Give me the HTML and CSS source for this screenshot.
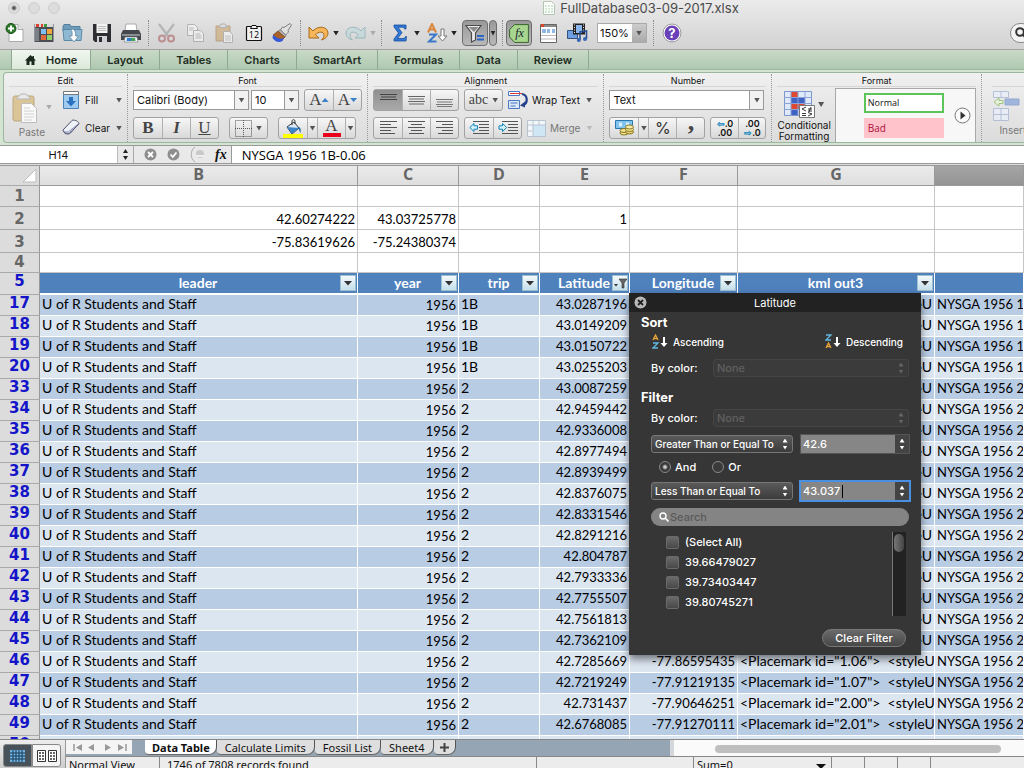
FILE: index.html
```html
<!DOCTYPE html>
<html lang="en">
<head>
<meta charset="utf-8">
<title>FullDatabase03-09-2017.xlsx</title>
<link rel="stylesheet" href="styles.css">
</head>
<body>
<header class="chrome">
  <div class="titlebar">
    <div class="lights"><span class="light light-edited"></span><span class="light"></span><span class="light"></span></div>
    <h1 class="title">
      <svg width="12" height="14" viewBox="0 0 12 14"><path d="M.5.500h8l3 3v10H.5z" fill="#fbfdfb" stroke="#b5c4b5"/><path d="M2 4h8v8H2z" fill="#cfe6cf"/><path d="M2 6.500h8M2 9h8M4.500 4v8M7.500 4v8" stroke="#fff"/></svg>
      FullDatabase03-09-2017.xlsx
    </h1>
  </div>
  <div class="toolbar">
    <button class="tool" aria-label="New"><svg width="20" height="20" viewBox="0 0 20 20"><path d="M4 1.500h9l5 5v12H4z" fill="#fff" stroke="#aaa"/><path d="M13 1.500v5h5" fill="#e8e8e8" stroke="#aaa"/><circle cx="6" cy="5.500" r="5" fill="#2c7a2a" stroke="#174d16"/><path d="M6 2.500v6M3 5.500h6" stroke="#fff" stroke-width="2"/></svg></button>
    <button class="tool" aria-label="Templates"><svg width="20" height="20" viewBox="0 0 20 20"><path d="M.5 1h19v18H.5z" fill="#4b4f55"/><path d="M1 1h18v3H1z" fill="#d9d9d9"/><path d="M2 1h3v3H2zM7 1h2v3H7z" fill="#d8412c"/><path d="M10 1h3v3h-3z" fill="#3f9a3f"/><path d="M1 5h4v13H1z" fill="#7b8087"/><path d="M7 6h5v5H7z" fill="#7fc1f4"/><path d="M13 6h5v5h-5z" fill="#f0a63a"/><path d="M7 12h5v5H7z" fill="#e06b3a"/><path d="M13 12h5v5h-5z" fill="#8ed36e"/></svg></button>
    <button class="tool" aria-label="Open"><svg width="21" height="20" viewBox="0 0 21 20"><path d="M1 3l1-1.500h6l1 2h9V8H1z" fill="#6f9cba" stroke="#54809e"/><path d="M1 6.500h19l-1 11H2z" fill="#8fb9d3" stroke="#5a89a8"/><path d="M9 6c4 0 5 3 4.500 7h3L12 19l-5-6h3c.4-3 0-5-1-7z" fill="#fff" stroke="#5d86a2" stroke-width=".8"/></svg></button>
    <button class="tool" aria-label="Save"><svg width="20" height="20" viewBox="0 0 20 20"><path d="M1 1h18v18H3l-2-2z" fill="#2c2e31"/><path d="M4.500 1h11v9h-11z" fill="#f3f3f3"/><path d="M6 3.500h8M6 5.500h8M6 7.500h8" stroke="#bbb"/><path d="M5 13h10v6H5z" fill="#cfd2d6"/><path d="M7 14h3v5H7z" fill="#2c2e31"/></svg></button>
    <button class="tool" aria-label="Print"><svg width="20" height="20" viewBox="0 0 20 20"><path d="M5 1h10l1 7H4z" fill="#fff" stroke="#999" stroke-width=".8"/><path d="M2 7h16l2 4v6H0v-6z" fill="#45484d"/><path d="M1 11h18v2H1z" fill="#8a8d92"/><path d="M4 14h12l1 5H3z" fill="#f4f8fc" stroke="#777" stroke-width=".6"/><path d="M6 15h4v3H5.500z" fill="#2e7fd0"/><path d="M10 15h4l.5 3H10z" fill="#43a35a"/></svg></button>
    <span class="divider"></span>
    <button class="tool tool-off" aria-label="Cut"><svg width="19" height="20" viewBox="0 0 19 20"><path d="M2 1l9 12M17 1L8 13" stroke="#8c8f93" stroke-width="2.200"/><circle cx="5" cy="15.500" r="3" fill="none" stroke="#a2484c" stroke-width="2"/><circle cx="14" cy="15.500" r="3" fill="none" stroke="#a2484c" stroke-width="2"/></svg></button>
    <button class="tool tool-off" aria-label="Copy"><svg width="19" height="20" viewBox="0 0 19 20"><path d="M1.500 1.500h7l3 3v8h-10z" fill="#fff" stroke="#888"/><path d="M7.500 7.500h7l3 3v8h-10z" fill="#fff" stroke="#888"/><path d="M3 5h5M3 7h4M9.500 11h5M9.500 13h6M9.500 15h6" stroke="#999"/></svg></button>
    <button class="tool tool-off" aria-label="Paste"><svg width="19" height="20" viewBox="0 0 19 20"><path d="M1 3h14v15H1z" fill="#c79a55" stroke="#94703a"/><path d="M4 4.500L6 1h4l2 3.500z" fill="#ddd" stroke="#888"/><path d="M8.500 8.500h6l3 3v8h-9z" fill="#fff" stroke="#888"/><path d="M10 13h6M10 15h6M10 17h6" stroke="#aaa"/></svg></button>
    <button class="tool" aria-label="Paste Special"><svg width="18" height="18" viewBox="0 0 18 18"><rect x="1.500" y="2.500" width="15" height="14" rx="1" fill="#f1f1f1" stroke="#111" stroke-width="1.200"/><path d="M5.500 4.500L7 1.500h4l1.500 3z" fill="#f1f1f1" stroke="#111"/><text x="9" y="14" text-anchor="middle" class="svg-num">12</text></svg></button>
    <button class="tool" aria-label="Format Painter"><svg width="21" height="20" viewBox="0 0 21 20"><path d="M19.500 2l-1.500-1.500-6 4-1.500-.5-2 3 5 5 3-3-.5-1.500z" fill="#e2e2e2" stroke="#666" stroke-width=".8"/><path d="M8 6.500l6 6-1.500 2-6.500-6z" fill="#b9bcc2" stroke="#555" stroke-width=".6"/><path d="M6 8L1 12l8 6 4-4z" fill="#a8622a" stroke="#6a3a14" stroke-width=".6"/><path d="M1 12l-.5 3c4 5 7 4.500 10 3l1.500-3c-4 2-7 0-11-3z" fill="#3558d8"/></svg></button>
    <span class="divider"></span>
    <button class="tool" aria-label="Undo"><svg width="21" height="18" viewBox="0 0 21 18"><path d="M1 3v11h10l-3.500-3.200C10 7.500 16 7 16 11c0 2-1 3.500-2.500 5C17 15 20 12.500 20 9c0-6.500-10-8-15-2z" fill="#f5b559" stroke="#a8691c"/></svg></button><span class="caret caret-tool"></span>
    <button class="tool tool-off" aria-label="Redo"><svg width="21" height="18" viewBox="0 0 21 18"><path d="M20 3v11H10l3.500-3.200C11 7.500 5 7 5 11c0 2 1 3.500 2.500 5C4 15 1 12.500 1 9c0-6.500 10-8 15-2z" fill="#b9dadf" stroke="#5f97a2"/></svg></button><span class="caret caret-tool caret-off"></span>
    <span class="divider"></span>
    <button class="tool" aria-label="AutoSum"><svg width="14" height="18" viewBox="0 0 14 18"><path d="M1 1h12v4h-1.500C11 3.500 10.500 3.200 9 3.200H5l4 5.500-4.500 5.800H10c1.500 0 2-.5 2.500-2H13.500L13 17H1v-2l4.500-6L1 3z" fill="#2f78d6" stroke="#1b4f9c" stroke-width=".8"/></svg></button><span class="caret caret-tool"></span>
    <button class="tool" aria-label="Sort"><svg width="22" height="20" viewBox="0 0 22 20"><path d="M2 9.500L6 1l4 8.500M3.500 6.500h5" fill="none" stroke="#d9853a" stroke-width="2"/><path d="M3 11.500h7L3 18.500h7.500" fill="none" stroke="#3b78c9" stroke-width="2"/><path d="M15 6h3v7h3l-4.500 5L12 13h3z" fill="#fff" stroke="#777"/></svg></button><span class="caret caret-tool"></span>
    <div class="pressed-pair">
      <button class="pressed" aria-label="Filter"><svg width="20" height="19" viewBox="0 0 20 19"><path d="M1 1.500h15L10.500 9v7l-4 2V9z" fill="#ececec" stroke="#4a4a4a" stroke-width="1.200"/><path d="M3.500 3h10L9 8z" fill="#8b8b8b"/><path d="M12 12h7M12 15.500h7" stroke="#2c66c4" stroke-width="2"/></svg></button>
      <button class="pressed pressed-arrow" aria-label="Filter options"><span class="caret"></span></button>
    </div>
    <span class="divider"></span>
    <button class="pressed" aria-label="Formula Builder"><svg width="20" height="19" viewBox="0 0 20 19"><path d="M5.500.600H19.400v17.800H5.500L.6 13V5.500z" fill="#a9d68f" stroke="#35652c"/><text x="10.500" y="13" text-anchor="middle" class="svg-fx">fx</text></svg></button>
    <button class="tool tool-lead" aria-label="Show Toolbox"><svg width="17" height="19" viewBox="0 0 17 19"><path d="M.5.500h16v18H.5z" fill="#fff" stroke="#666"/><path d="M1 1h15v2H1z" fill="#8a8a8a"/><path d="M1 0h3v3H1z" fill="#d4472b"/><path d="M2 5h4v4H2zM7 5h3v4H7zM12 5h3v4h-3z" fill="#8fb7e6"/><path d="M1 11.500h15M1 15h15" stroke="#b9b9b9"/></svg></button>
    <button class="tool" aria-label="Media Browser"><svg width="21" height="20" viewBox="0 0 21 20"><path d="M.5 7.500h10v8H.5z" fill="#6f9fe0" stroke="#34527f"/><path d="M6 .500h12v11H6z" fill="#222"/><path d="M9 2h6v8H9z" fill="#8ab7ee"/><path d="M7 2h1M7 4.500h1M7 7h1M7 9.500h1M16 2h1M16 4.500h1M16 7h1" stroke="#eee"/><path d="M13 17V9l6.500-1v8" fill="none" stroke="#2b4f93" stroke-width="1.600"/><circle cx="11.800" cy="17" r="2" fill="#3765b5"/><circle cx="18" cy="16" r="2" fill="#3765b5"/></svg></button>
    <div class="zoom"><input class="zoom-value" type="text" value="150%" aria-label="Zoom"><button class="zoom-drop" aria-label="Zoom levels"><span class="caret caret-dim"></span></button></div>
    <span class="divider"></span>
    <button class="tool" aria-label="Help"><svg width="20" height="20" viewBox="0 0 20 20"><circle cx="10" cy="10" r="9" fill="#fff" stroke="#999"/><circle cx="10" cy="10" r="7.500" fill="#6a40b8"/><text x="10" y="15" text-anchor="middle" class="svg-help">?</text></svg></button>
    <button class="search-round" aria-label="Search in sheet"><svg width="12" height="12" viewBox="0 0 12 12"><circle cx="5" cy="5" r="3.800" fill="none" stroke="#333" stroke-width="2"/><path d="M8 8l3.500 3.500" stroke="#333" stroke-width="2"/></svg></button>
  </div>
</header>

<nav class="tabs">
  <span class="tabs-edge"></span>
  <button class="tab tab-on"><svg width="11" height="10" viewBox="0 0 11 10"><path d="M5.500 0L0 5.500h1.500V10h3V6.500h2V10h3V5.500H11L9 3.500V1H7.500v1z" fill="#1b2a1b"/></svg>Home</button>
  <button class="tab">Layout</button>
  <button class="tab">Tables</button>
  <button class="tab">Charts</button>
  <button class="tab">SmartArt</button>
  <button class="tab">Formulas</button>
  <button class="tab">Data</button>
  <button class="tab">Review</button>
</nav>

<section class="ribbon">
  <div class="panel">
    <div class="group">
      <h2>Edit</h2>
      <div class="side">
        <button class="big big-off paste"><span class="big-row"><svg width="26" height="31" viewBox="0 0 26 31"><rect x="1" y="4" width="21" height="25" rx="2" fill="#d9bd84" stroke="#b39a68"/><path d="M5 7c0-4 3-2 4-5h5c1 3 4 1 4 5z" fill="#e9e9e9" stroke="#aaa"/><path d="M9.500 11.500h10l5 5v14h-15z" fill="#fff" stroke="#b5b5b5"/><path d="M12 16h6M12 19h10M12 22h10M12 25h10M12 28h8" stroke="#ccc"/></svg><span class="caret caret-off"></span></span>Paste</button>
        <div class="rows">
          <div class="row"><button class="flat"><svg width="18" height="20" viewBox="0 0 18 20"><path d="M1.500 4.500h15v14h-15z" fill="#9fcbf0" stroke="#4b82b8"/><path d="M1.500 1.500h15v3h-15z" fill="#fff" stroke="#777"/><path d="M7 7h4v4h3l-5 5.500L4 11h3z" fill="#2a72c0"/></svg><span class="flat-label">Fill</span><span class="caret"></span></button></div>
          <div class="row"><button class="flat"><svg width="18" height="18" viewBox="0 0 18 18"><path d="M1 11L10 1.500c1-1 6 0 7 3L8.500 14c-2 2-7 1-7.500-3z" fill="#f0f2fa" stroke="#4c4f66"/><path d="M1 11c2 3 5 2 7 .500L17 4.500" fill="none" stroke="#8c91b5"/><path d="M1.500 12.500c2 2.500 5 2 6.500 1L17 5" fill="none" stroke="#5a5f80"/></svg><span class="flat-label">Clear</span><span class="caret"></span></button></div>
        </div>
      </div>
    </div>
    <div class="group">
      <h2>Font</h2>
      <div class="rows">
        <div class="row">
          <div class="combo combo-font"><input type="text" value="Calibri (Body)" aria-label="Font name"><button aria-label="Font list"><span class="caret"></span></button></div>
          <div class="combo combo-size"><input type="text" value="10" aria-label="Font size"><button aria-label="Size list"><span class="caret"></span></button></div>
          <div class="seg seg-after"><button aria-label="Grow font" class="serif">A<i class="up"></i></button><button aria-label="Shrink font" class="serif">A<i class="down"></i></button></div>
        </div>
        <div class="row row-wide">
          <div class="seg"><button class="serif"><b>B</b></button><button class="serif"><b><em>I</em></b></button><button class="serif"><u>U</u></button></div>
          <div class="seg"><button class="with-caret" aria-label="Borders"><svg width="17" height="17" viewBox="0 0 17 17"><path d="M.5.500h16v16H.5zM8.500 0v17M0 8.500h17" fill="none" stroke="#555" stroke-dasharray="1 1"/></svg><span class="caret"></span></button></div>
          <div class="seg"><button aria-label="Fill color" class="swatch"><svg width="20" height="19" viewBox="0 0 20 19"><path d="M4 8l7-5 5 6-7 6z" fill="#dfe8f2" stroke="#333"/><path d="M4 8l12 1-7 6z" fill="#3e86c8"/><path d="M9 6V2.500C9 0 12 0 12 2.500V5" fill="none" stroke="#333"/><path d="M15 8c3 0 3 3 2.500 6-1.500-2-1-4-3-5z" fill="#2867a8"/><path d="M0 15h20v4H0z" fill="#ff0"/></svg></button><button class="thin" aria-label="Fill color list"><span class="caret"></span></button><button aria-label="Font color" class="swatch serif"><span class="ink">A</span></button><button class="thin" aria-label="Font color list"><span class="caret"></span></button></div>
        </div>
      </div>
    </div>
    <div class="group">
      <h2>Alignment</h2>
      <div class="rows">
        <div class="row">
          <div class="seg"><button class="on" aria-label="Align top"><svg width="17" height="14" viewBox="0 0 17 14"><path d="M0 1.500h17M1 4h15M0 6.500h17" stroke="#444"/></svg></button><button aria-label="Align middle"><svg width="17" height="14" viewBox="0 0 17 14"><path d="M0 3.500h17M1 6h15M0 8.500h17M1 11h15" stroke="#666"/></svg></button><button aria-label="Align bottom"><svg width="17" height="14" viewBox="0 0 17 14"><path d="M0 6.500h17M1 9h15M0 11.500h17M1 13.500h15" stroke="#777"/></svg></button></div>
          <div class="seg"><button class="with-caret serif abc">abc<span class="caret"></span></button></div>
          <button class="flat wrap"><svg width="20" height="18" viewBox="0 0 20 18"><path d="M.5.500h11v4H.5z" fill="#fff" stroke="#4a76c2"/><path d="M2 2.500h12" stroke="#d33"/><path d="M.5 9.500h11v8H.5z" fill="#dbe8fa" stroke="#4a76c2"/><path d="M2.500 12h7M2.500 15h5" stroke="#4a76c2"/><path d="M14 3c6 1 6 9 1.500 11" fill="none" stroke="#27408b" stroke-width="2.200"/><path d="M17 10.500v6l-5-2z" fill="#27408b"/></svg><span>Wrap Text</span><span class="caret"></span></button>
        </div>
        <div class="row">
          <div class="seg"><button aria-label="Align left"><svg width="17" height="14" viewBox="0 0 17 14"><path d="M0 .500h17M0 3.500h11M0 6.500h17M0 9.500h11M0 12.500h15" stroke="#555"/></svg></button><button aria-label="Align center"><svg width="17" height="14" viewBox="0 0 17 14"><path d="M0 .500h17M3 3.500h11M0 6.500h17M3 9.500h11M1 12.500h15" stroke="#555"/></svg></button><button aria-label="Align right"><svg width="17" height="14" viewBox="0 0 17 14"><path d="M0 .500h17M6 3.500h11M0 6.500h17M6 9.500h11M2 12.500h15" stroke="#555"/></svg></button></div>
          <div class="seg"><button aria-label="Decrease indent"><svg width="20" height="14" viewBox="0 0 20 14"><path d="M4 .500h16M10 3.500h10M10 6.500h10M10 9.500h10M4 12.500h16" stroke="#555"/><path d="M.8 6.500L5 2.500v2.300h3.500v3.400H5v2.300z" fill="#d7f1fb" stroke="#0f86bd"/></svg></button><button aria-label="Increase indent"><svg width="20" height="14" viewBox="0 0 20 14"><path d="M4 .500h16M10 3.500h10M10 6.500h10M10 9.500h10M4 12.500h16" stroke="#555"/><path d="M8.700 6.500L4.500 2.500v2.300H1v3.400h3.500v2.300z" fill="#d7f1fb" stroke="#0f86bd"/></svg></button></div>
          <button class="flat wrap flat-off"><svg width="19" height="17" viewBox="0 0 19 17"><path d="M.5.500h18v16H.5z" fill="#f4f7fa" stroke="#b7c4cf"/><path d="M6 5h12v11H6z" fill="#cfe6f5"/><path d="M.5 5h18M.5 11h5M6 .500v16M12 .500V5" stroke="#b7c4cf"/></svg><span>Merge</span><span class="caret"></span></button>
        </div>
      </div>
    </div>
    <div class="group">
      <h2>Number</h2>
      <div class="rows">
        <div class="row"><div class="combo combo-number"><input type="text" value="Text" aria-label="Number format"><button aria-label="Format list"><span class="caret"></span></button></div></div>
        <div class="row">
          <div class="seg"><button aria-label="Currency"><svg width="19" height="16" viewBox="0 0 19 16"><path d="M.5.500h17v8H.5z" fill="#7fc4ee" stroke="#2b76ae"/><path d="M4 2.500h3v4H4zM11 2.500h3v3h-3z" fill="#d9f0fc"/><ellipse cx="9" cy="13" rx="4" ry="2" fill="#f3e38a" stroke="#857628"/><ellipse cx="9" cy="10.500" rx="4" ry="2" fill="#f3e38a" stroke="#857628"/><ellipse cx="14.500" cy="12" rx="4" ry="2" fill="#e5d06a" stroke="#857628"/><ellipse cx="14.500" cy="9.500" rx="4" ry="2" fill="#f3e38a" stroke="#857628"/><ellipse cx="14.500" cy="7" rx="4" ry="2" fill="#f7eca8" stroke="#857628"/></svg></button><button class="thin" aria-label="Currency list"><span class="caret"></span></button><button class="glyph">%</button><button class="serif comma"><b>,</b></button></div>
          <div class="seg"><button class="dec" aria-label="Increase decimal"><span><i class="arrow-l">⇦</i>.0</span><span>.00</span></button><button class="dec" aria-label="Decrease decimal"><span>.00</span><span><i class="arrow-l">⇨</i>.0</span></button></div>
        </div>
      </div>
    </div>
    <div class="group">
      <h2>Format</h2>
      <div class="side side-format">
        <button class="big cond"><span class="big-row"><svg width="32" height="28" viewBox="0 0 32 28"><path d="M.5.500h27v24H.5z" fill="#dfe9fa" stroke="#7d97cc"/><path d="M7 1h7v5H7zM7 13h14v5H7z" fill="#e0492f"/><path d="M7 7h14v5H7zM7 19h7v5H7z" fill="#3f63c4"/><path d="M0 6.500h28M0 12.500h28M0 18.500h28M7 0v25M14 0v25M21 0v25" stroke="#8ba3d6"/><path d="M15.500 14.500h15v12h-15z" fill="#fff" stroke="#777"/><path d="M22 16l-4 2 4 2M18 22.500h4M24 18h4M24 20h4M27 16l-2 5M24 21.500l4 1.500-4 2M18 24.500h4" fill="none" stroke="#222" stroke-width=".9"/></svg><span class="caret"></span></span>Conditional<br>Formatting</button>
        <div class="gallery">
          <div class="styles"><button class="style-normal">Normal</button><button class="style-bad">Bad</button></div>
          <button class="more" aria-label="More styles"><svg width="17" height="17" viewBox="0 0 17 17"><circle cx="8.500" cy="8.500" r="7.500" fill="#fafafa" stroke="#777"/><path d="M6.500 4.500v8l5-4z" fill="#333"/></svg></button>
        </div>
      </div>
    </div>
    <div class="group group-last">
      <h2></h2>
      <button class="big big-off insert"><span class="big-row"><svg width="28" height="31" viewBox="0 0 28 31"><path d="M1.500 1.500h15v6h-15zM9 1v7M1.500 18.500h15v12h-15zM9 18v13M1 24.500h16" fill="#e9eef8" stroke="#a9b6d3"/><path d="M13 9h14v6H13z" fill="#8fa9dc" stroke="#7f99cc"/><path d="M2 12l5-4v2.500h4v3H7V16z" fill="#e6f6d8" stroke="#8fbf6a"/></svg><span class="caret caret-off"></span></span>Insert</button>
    </div>
  </div>
</section>

<section class="formula">
  <input class="name-box" type="text" value="H14" aria-label="Name box">
  <span class="name-step"><i></i><i></i></span>
  <div class="formula-tools">
    <svg width="13" height="13" viewBox="0 0 13 13"><circle cx="6.500" cy="6.500" r="6" fill="#8e8e8e"/><path d="M4 4l5 5M9 4L4 9" stroke="#fff" stroke-width="1.800"/></svg>
    <svg width="13" height="13" viewBox="0 0 13 13"><circle cx="6.500" cy="6.500" r="6" fill="#8e8e8e"/><path d="M3.500 6.500l2.300 2.500L9.500 4.500" fill="none" stroke="#fff" stroke-width="1.800"/></svg>
    <svg width="15" height="17" viewBox="0 0 15 17"><path d="M5 1C0 4 0 13 5 16" fill="none" stroke="#aaa"/><circle cx="10" cy="8" r="4" fill="#c9c9c9"/><path d="M6 10h8" stroke="#eee" stroke-width="2"/></svg>
    <span class="fx">fx</span>
  </div>
  <input class="formula-text" type="text" value="NYSGA 1956 1B-0.06" aria-label="Formula">
</section>

<main class="sheet">
<table>
  <colgroup><col class="c-row"><col class="c-b"><col class="c-c"><col class="c-d"><col class="c-e"><col class="c-f"><col class="c-g"><col></colgroup>
  <thead><tr class="letters"><th class="corner"><svg width="15" height="15" viewBox="0 0 15 15"><path d="M14 1v13H1z" fill="#fff" stroke="#bbb"/></svg></th><th>B</th><th>C</th><th>D</th><th>E</th><th>F</th><th>G</th><th class="picked"></th></tr></thead>
  <tbody class="plain">
    <tr class="short"><th>1</th><td></td><td></td><td></td><td></td><td></td><td></td><td></td></tr>
    <tr><th>2</th><td class="n">42.60274222</td><td class="n">43.03725778</td><td></td><td class="n">1</td><td></td><td></td><td></td></tr>
    <tr><th>3</th><td class="n">-75.83619626</td><td class="n">-75.24380374</td><td></td><td></td><td></td><td></td><td></td></tr>
    <tr class="shorter"><th>4</th><td></td><td></td><td></td><td></td><td></td><td></td><td></td></tr>
  </tbody>
  <tbody class="data">
    <tr class="fields"><th class="r">5</th>
      <th><div class="field"><span>leader</span><button class="drop" aria-label="Filter leader"></button></div></th>
      <th><div class="field"><span>year</span><button class="drop" aria-label="Filter year"></button></div></th>
      <th><div class="field"><span>trip</span><button class="drop" aria-label="Filter trip"></button></div></th>
      <th><div class="field"><span>Latitude</span><button class="drop drop-on" aria-label="Filter Latitude"><svg width="14" height="12" viewBox="0 0 14 12"><path d="M1 7h4L3 9.500z" fill="#333"/><path d="M6 2h8L11 6v5H9V6z" fill="#666" stroke="#333" stroke-width=".6"/></svg></button></div></th>
      <th><div class="field"><span>Longitude</span><button class="drop" aria-label="Filter Longitude"></button></div></th>
      <th><div class="field"><span>kml out3</span><button class="drop" aria-label="Filter kml out3"></button></div></th>
      <th class="field-h"></th></tr>
    <tr><th>17</th><td>U of R Students and Staff</td><td class="y">1956</td><td>1B</td><td class="n">43.0287196</td><td></td><td class="k">&lt;styleU</td><td class="h">NYSGA 1956 1B-0.03</td></tr>
    <tr><th>18</th><td>U of R Students and Staff</td><td class="y">1956</td><td>1B</td><td class="n">43.0149209</td><td></td><td class="k">&lt;styleU</td><td class="h">NYSGA 1956 1B-0.04</td></tr>
    <tr><th>19</th><td>U of R Students and Staff</td><td class="y">1956</td><td>1B</td><td class="n">43.0150722</td><td></td><td class="k">&lt;styleU</td><td class="h">NYSGA 1956 1B-0.05</td></tr>
    <tr><th>20</th><td>U of R Students and Staff</td><td class="y">1956</td><td>1B</td><td class="n">43.0255203</td><td></td><td class="k">&lt;styleU</td><td class="h">NYSGA 1956 1B-0.06</td></tr>
    <tr><th>33</th><td>U of R Students and Staff</td><td class="y">1956</td><td>2</td><td class="n">43.0087259</td><td></td><td class="k">&lt;styleU</td><td class="h">NYSGA 1956 2</td></tr>
    <tr><th>34</th><td>U of R Students and Staff</td><td class="y">1956</td><td>2</td><td class="n">42.9459442</td><td></td><td class="k">&lt;styleU</td><td class="h">NYSGA 1956 2</td></tr>
    <tr><th>35</th><td>U of R Students and Staff</td><td class="y">1956</td><td>2</td><td class="n">42.9336008</td><td></td><td class="k">&lt;styleU</td><td class="h">NYSGA 1956 2</td></tr>
    <tr><th>36</th><td>U of R Students and Staff</td><td class="y">1956</td><td>2</td><td class="n">42.8977494</td><td></td><td class="k">&lt;styleU</td><td class="h">NYSGA 1956 2</td></tr>
    <tr><th>37</th><td>U of R Students and Staff</td><td class="y">1956</td><td>2</td><td class="n">42.8939499</td><td></td><td class="k">&lt;styleU</td><td class="h">NYSGA 1956 2</td></tr>
    <tr><th>38</th><td>U of R Students and Staff</td><td class="y">1956</td><td>2</td><td class="n">42.8376075</td><td></td><td class="k">&lt;styleU</td><td class="h">NYSGA 1956 2</td></tr>
    <tr><th>39</th><td>U of R Students and Staff</td><td class="y">1956</td><td>2</td><td class="n">42.8331546</td><td></td><td class="k">&lt;styleU</td><td class="h">NYSGA 1956 2</td></tr>
    <tr><th>40</th><td>U of R Students and Staff</td><td class="y">1956</td><td>2</td><td class="n">42.8291216</td><td></td><td class="k">&lt;styleU</td><td class="h">NYSGA 1956 2</td></tr>
    <tr><th>41</th><td>U of R Students and Staff</td><td class="y">1956</td><td>2</td><td class="n">42.804787</td><td></td><td class="k">&lt;styleU</td><td class="h">NYSGA 1956 2</td></tr>
    <tr><th>42</th><td>U of R Students and Staff</td><td class="y">1956</td><td>2</td><td class="n">42.7933336</td><td></td><td class="k">&lt;styleU</td><td class="h">NYSGA 1956 2</td></tr>
    <tr><th>43</th><td>U of R Students and Staff</td><td class="y">1956</td><td>2</td><td class="n">42.7755507</td><td></td><td class="k">&lt;styleU</td><td class="h">NYSGA 1956 2</td></tr>
    <tr><th>44</th><td>U of R Students and Staff</td><td class="y">1956</td><td>2</td><td class="n">42.7561813</td><td></td><td class="k">&lt;styleU</td><td class="h">NYSGA 1956 2</td></tr>
    <tr><th>45</th><td>U of R Students and Staff</td><td class="y">1956</td><td>2</td><td class="n">42.7362109</td><td></td><td class="k">&lt;styleU</td><td class="h">NYSGA 1956 2</td></tr>
    <tr><th>46</th><td>U of R Students and Staff</td><td class="y">1956</td><td>2</td><td class="n">42.7285669</td><td class="n">-77.86595435</td><td>&lt;Placemark id="1.06"&gt;  &lt;styleU</td><td class="h">NYSGA 1956 2</td></tr>
    <tr><th>47</th><td>U of R Students and Staff</td><td class="y">1956</td><td>2</td><td class="n">42.7219249</td><td class="n">-77.91219135</td><td>&lt;Placemark id="1.07"&gt;  &lt;styleU</td><td class="h">NYSGA 1956 2</td></tr>
    <tr><th>48</th><td>U of R Students and Staff</td><td class="y">1956</td><td>2</td><td class="n">42.731437</td><td class="n">-77.90646251</td><td>&lt;Placemark id="2.00"&gt;  &lt;styleU</td><td class="h">NYSGA 1956 2</td></tr>
    <tr><th>49</th><td>U of R Students and Staff</td><td class="y">1956</td><td>2</td><td class="n">42.6768085</td><td class="n">-77.91270111</td><td>&lt;Placemark id="2.01"&gt;  &lt;styleU</td><td class="h">NYSGA 1956 2</td></tr>
    <tr><th>50</th><td></td><td></td><td></td><td></td><td></td><td></td><td></td></tr>
  </tbody>
</table>
</main>

<form class="filter">
  <div class="filter-head"><button type="button" class="close" aria-label="Close"><svg width="13" height="13" viewBox="0 0 13 13"><circle cx="6.500" cy="6.500" r="6" fill="#b9b9b9"/><path d="M4 4l5 5M9 4L4 9" stroke="#222" stroke-width="1.800"/></svg></button><span>Latitude</span></div>
  <div class="filter-body">
    <h3>Sort</h3>
    <div class="sorts">
      <button type="button"><svg width="16" height="15" viewBox="0 0 16 15"><path d="M1 6l2.500-5L6 6M2 4.500h3" fill="none" stroke="#e8a33a" stroke-width="1.300"/><path d="M1 9h5l-5 5h5" fill="none" stroke="#62b8e0" stroke-width="1.300"/><path d="M11 3h2v6h2.500L12 13 8.500 9H11z" fill="#fff"/></svg>Ascending</button>
      <button type="button"><svg width="16" height="15" viewBox="0 0 16 15"><path d="M1 1h5L1 6h5" fill="none" stroke="#62b8e0" stroke-width="1.300"/><path d="M1 14l2.500-5L6 14M2 12.500h3" fill="none" stroke="#e8a33a" stroke-width="1.300"/><path d="M11 3h2v6h2.500L12 13 8.500 9H11z" fill="#fff"/></svg>Descending</button>
    </div>
    <div class="by-color by-sort"><label for="sort-color">By color:</label><div class="pick pick-off"><select id="sort-color" disabled><option>None</option></select><span class="ticks"><i></i><i></i></span></div></div>
    <h3>Filter</h3>
    <div class="by-color"><label for="filter-color">By color:</label><div class="pick pick-off"><select id="filter-color" disabled><option>None</option></select><span class="ticks"><i></i><i></i></span></div></div>
    <div class="rule">
      <div class="pick"><select aria-label="First condition"><option>Greater Than or Equal To</option></select><span class="ticks"><i></i><i></i></span></div>
      <div class="amount"><input type="text" value="42.6" aria-label="First value"><span class="ticks"><i></i><i></i></span></div>
    </div>
    <div class="joins"><label><input type="radio" name="join" checked>And</label><label><input type="radio" name="join">Or</label></div>
    <div class="rule">
      <div class="pick"><select aria-label="Second condition"><option>Less Than or Equal To</option></select><span class="ticks"><i></i><i></i></span></div>
      <div class="amount amount-on"><input type="text" value="43.037" aria-label="Second value"><b class="cursor"></b><span class="ticks"><i></i><i></i></span></div>
    </div>
    <div class="find"><svg width="10" height="10" viewBox="0 0 10 10"><circle cx="4" cy="4" r="3" fill="none" stroke="#fff" stroke-width="1.400"/><path d="M6.300 6.300L9.500 9.500" stroke="#fff" stroke-width="1.600"/></svg><input type="search" placeholder="Search" aria-label="Search values"></div>
    <div class="values">
      <div class="value-list">
        <label><input type="checkbox">(Select All)</label>
        <label><input type="checkbox">39.66479027</label>
        <label><input type="checkbox">39.73403447</label>
        <label><input type="checkbox">39.80745271</label>
      </div>
      <div class="track"><div class="thumb"></div></div>
    </div>
    <button type="button" class="clear">Clear Filter</button>
  </div>
</form>

<footer class="bottom">
  <div class="views">
    <button class="view view-on" aria-label="Normal View"><svg width="15" height="12" viewBox="0 0 15 12"><path d="M0 0h15v12H0z" fill="#6fb4e6"/><path d="M0 3h15M0 6h15M0 9h15M3 0v12M6 0v12M9 0v12M12 0v12" stroke="#1d3a52"/></svg></button>
    <button class="view" aria-label="Page Layout View"><svg width="20" height="12" viewBox="0 0 20 12"><path d="M.5.500h8v11h-8zM11.500.500h8v11h-8z" fill="#fff" stroke="#333"/><path d="M2 3h5M2 6h5M2 9h5M13 3h5M13 6h5M13 9h5" stroke="#333" stroke-width="1.600" stroke-dasharray="2 1"/></svg></button>
  </div>
  <div class="bars">
    <div class="sheet-bar">
      <div class="steps"><svg width="56" height="9" viewBox="0 0 56 9"><path d="M1 1v7M53 1v7" stroke="#999" stroke-width="1.500"/><path d="M9 1v7L3 4.500zM21 1v7l-6-3.500zM32 1v7l6-3.500zM45 1v7l6-3.500z" fill="#999"/></svg></div>
      <div class="sheets">
        <button class="sheet-tab sheet-tab-on">Data Table</button><button class="sheet-tab">Calculate Limits</button><button class="sheet-tab">Fossil List</button><button class="sheet-tab">Sheet4</button><button class="sheet-tab add" aria-label="Add sheet"><svg width="9" height="9" viewBox="0 0 9 9"><path d="M4.500 0v9M0 4.500h9" stroke="#444" stroke-width="2"/></svg></button>
      </div>
      <div class="scroll"><div class="scroll-thumb"></div></div>
    </div>
    <div class="status"><span class="s-view">Normal View</span><span class="s-found">1746 of 7808 records found</span><span class="s-gap"></span><span class="s-sum">Sum=0<span class="caret caret-big"></span></span><span class="s-box"></span><span class="s-box"></span><span class="s-box"></span><span class="s-rest"></span></div>
  </div>
</footer>
</body>
</html>
```

FILE: styles.css
```css
* { box-sizing: border-box; }
html, body { height: 100%; }
body {
  margin: 0; display: flex; flex-direction: column; overflow: hidden;
  position: relative; background: #fff; color: #111;
  font: 11px/14px Inter, sans-serif;
}
button, input, select { font: inherit; color: inherit; margin: 0; padding: 0; border: 0; background: none; border-radius: 0; min-width: 0; }
button { display: flex; align-items: center; justify-content: center; }
svg { display: block; flex: none; }
h1, h2, h3 { margin: 0; font-weight: 400; }

.caret { flex: none; width: 6px; height: 5px; background: #555; clip-path: polygon(0 0, 100% 0, 50% 100%); }
.caret-tool { background: #222; margin-right: 2px; }
.caret-off { background: #aaa; }
.caret-dim { background: #555; }

/* title bar and toolbar */
.chrome { flex: none; height: 50px; background: linear-gradient(#ebebeb, #d2d2d2); border-bottom: 1px solid #a3a3a3; }
.titlebar { height: 16px; display: flex; align-items: center; }
.lights { position: absolute; display: flex; gap: 8px; padding-left: 8px; }
.light { width: 12px; height: 12px; border-radius: 50%; background: #dcdcdc; border: 1px solid #cecece; }
.light-edited { background: radial-gradient(#555 0 1px, #dcdcdc 3px); }
.title { flex: 1; display: flex; justify-content: center; align-items: center; gap: 5px; padding-left: 258px; font-size: 13px; color: #4a4a4a; }
.toolbar { display: flex; align-items: center; height: 34px; }
.tool { flex: none; width: 29px; height: 28px; }
.tool-off { opacity: .5; }
.tool-lead { margin-left: 2px; }
.divider { flex: none; width: 1px; height: 26px; margin: 0 3px; border-left: 1px dotted #888; }
.pressed-pair { display: flex; margin-left: 3px; margin-right: 2px; gap: 1px; }
.pressed { width: 26px; height: 26px; border: 1px solid #6e6e6e; border-radius: 4px; background: linear-gradient(#999, #b9b9b9); }
.pressed-arrow { width: 8px; }
.pressed-arrow .caret { width: 5px; background: #222; }
.svg-num { font: 9px "Open Sans", sans-serif; }
.svg-fx { font: italic 12px "Liberation Serif", serif; fill: #123; }
.svg-help { font: 700 13px Inter, sans-serif; fill: #fff; }
.zoom { display: flex; width: 50px; height: 20px; margin: 0 3px 0 5px; border: 1px solid #aaa; background: #fff; }
.zoom-value { flex: 1; padding-left: 2px; }
.zoom-drop { width: 14px; background: linear-gradient(#ccc, #aaa); }
.search-round { margin-left: auto; margin-right: -8px; width: 22px; height: 20px; flex: none; border: 1px solid #888; border-radius: 10px; background: #f3f3f3; }

/* ribbon tabs */
.tabs { flex: none; display: flex; height: 20px; background: linear-gradient(#c9dac6, #aec8b0); border-bottom: 1px solid #9cb59d; }
.tabs-edge { width: 12px; border-right: 1px solid #8fa891; }
.tab { padding: 0 16px; font-weight: 600; color: #1e2c1f; border-right: 1px solid #8fa891; gap: 10px; }
.tab-on { padding: 0 13px; background: linear-gradient(#f0f7ef, #dce9da); }

/* ribbon */
.ribbon { flex: none; padding: 2px 0 2px 3px; background: #d3e4d1; }
.panel { display: flex; height: 71px; border: 1px solid #9db79e; border-right: 0; border-radius: 4px 0 0 4px; background: linear-gradient(#f0f0f0, #dcdcdc); overflow: hidden; }
.group { flex: none; padding: 0 5px; margin-top: 1px; border-right: 1px dotted #999; }
.group-last { flex: 1; border: 0; padding-left: 10px; }
.group h2 { height: 13px; font-size: 9px; line-height: 13px; text-align: center; border-bottom: 1px solid #d6d6d6; }
.rows { display: grid; gap: 6px; padding-top: 2px; }
.row { display: flex; align-items: center; gap: 5px; height: 22px; }
.row-wide { gap: 10px; }
.side { display: flex; gap: 10px; }
.side-format { gap: 4px; }
.big { flex-direction: column; font-size: 10px; line-height: 11px; padding-top: 2px; }
.big-row { display: flex; align-items: center; gap: 8px; margin-bottom: 4px; }
.big-off { color: #777; }
.big-off svg { opacity: .8; }
.paste { padding-left: 3px; padding-top: 3px; }
.cond { padding: 0; }
.cond .big-row { gap: 2px; margin-top: 2px; margin-bottom: 1px; }
.insert { padding-top: 3px; }
.flat { gap: 5px; height: 22px; font-size: 10px; }
.flat-label { width: 26px; text-align: left; }
.flat-off { color: #777; }
.flat-off .caret { background: #bbb; }
.wrap { gap: 4px; }
.wrap .caret { margin-left: 2px; margin-right: 6px; }
.combo { display: flex; height: 20px; border: 1px solid #999; background: #fff; }
.combo input { flex: 1; width: 0; padding-left: 3px; }
.combo button { width: 14px; border-left: 1px solid #999; background: #f1f1f1; }
.combo-font { width: 116px; }
.combo-size { width: 48px; margin-left: -3px; }
.combo-number { width: 155px; }
.seg { display: flex; border: 1px solid #a2a2a2; border-radius: 3px; background: linear-gradient(#f6f6f6, #d9d9d9); height: 22px; }
.seg button { width: 28px; }
.seg button + button { border-left: 1px solid #b0b0b0; }
.seg .thin { width: 10px; }
.seg .with-caret { width: 37px; gap: 4px; }
.seg .dec { width: 27px; }
.seg .on { background: linear-gradient(#8f8f8f, #a9a9a9); }
.serif { font-family: "Liberation Serif", serif; font-size: 17px; color: #444; }
.abc { font-size: 14px; }
.up, .down { width: 7px; height: 4px; background: #3c82c8; clip-path: polygon(50% 0, 100% 100%, 0 100%); }
.down { clip-path: polygon(0 0, 100% 0, 50% 100%); }
.ink { display: block; line-height: 14px; border-bottom: 4px solid #e8001c; width: 18px; }
.glyph { font-size: 16px; color: #333; }
.comma { font-size: 26px; line-height: 10px; padding-bottom: 12px; }
.dec { flex-direction: column; font-size: 9px; line-height: 9px; align-items: center; font-weight: 600; }
.arrow-l { font-style: normal; color: #0f86bd; }
.gallery { display: flex; align-items: center; gap: 10px; margin-top: 1px; height: 55px; padding: 0 4px 0 28px; border: 1px solid #a8a8a8; background: #f7f7f7; }
.styles { display: grid; gap: 5px; width: 80px; }
.styles button { height: 20px; justify-content: flex-start; padding-left: 4px; font-family: "Open Sans", sans-serif; }
.styles .style-normal { font-size: 9px; background: #fff; border: 2px solid #5cc458; padding-left: 2px; }
.styles .style-bad { font-size: 10px; background: #ffc3cb; color: #b0103a; }

/* formula bar */
.formula { flex: none; display: flex; align-items: stretch; height: 19px; border-top: 1px solid #999; border-bottom: 1px solid #999; background: #e9e9e9; }
.name-box { width: 117px; text-align: center; background: #fff; }
.name-step { display: flex; flex-direction: column; justify-content: center; gap: 3px; width: 17px; align-items: center; border-left: 1px solid #bbb; border-right: 1px solid #aaa; }
.name-step i, .ticks i { width: 5px; height: 4px; background: #222; clip-path: polygon(50% 0, 100% 100%, 0 100%); }
.name-step i:last-child, .ticks i:last-child { clip-path: polygon(0 0, 100% 0, 50% 100%); }
.formula-tools { display: flex; align-items: center; gap: 10px; padding: 0 4px 0 10px; border-right: 1px solid #999; }
.fx { font: italic 700 14px "Liberation Serif", serif; }
.formula-text { flex: 1; padding-left: 10px; background: #fff; font: 13px "Open Sans", sans-serif; color: #000; }

/* sheet */
.sheet { flex: 1; min-height: 0; overflow: hidden; border-top: 1px solid #dcdcdc; }
table { table-layout: fixed; width: 100%; border-collapse: separate; border-spacing: 0; }
.c-row { width: 40px; } .c-b { width: 318px; } .c-c { width: 101px; } .c-d { width: 81px; }
.c-e { width: 90px; } .c-f { width: 108px; } .c-g { width: 197px; }
th, td { padding: 0 2px; height: 21px; line-height: 18px; overflow: hidden; white-space: pre; }
td { font-family: Lato, sans-serif; font-size: 14px; color: #000; text-align: left; border-right: 1px solid #c6c6c6; border-bottom: 1px solid #c6c6c6; }
.letters th { height: 21px; font: 700 16px/16px "Open Sans", sans-serif; vertical-align: top; color: #666; background: linear-gradient(#ebebeb, #dedede); border-top: 1px solid #999; border-right: 1px solid #999; border-bottom: 1px solid #999; }
.letters .picked { background: linear-gradient(#a5a5a5, #949494); }
.letters .corner svg { margin: 2px 0 0 auto; }
tr > th:first-child { font: 700 15px/17px "DejaVu Sans", sans-serif; text-align: center; background: #dcdcdc; border-right: 1px solid #999; border-bottom: 1px solid #aaa; color: #666; }
.plain tr > * { height: 23px; padding-top: 2px; }
.plain .short > * { height: 21px; padding-top: 0; }
.plain .shorter > * { height: 20px; padding-top: 0; }
.n, .y { text-align: right; }
.n, .y, .h { font-size: 13px; }
.k { text-align: right; }
.data tr > * { vertical-align: top; }
.data tr > .y { vertical-align: middle; }
.data tr > th:first-child { color: #1414c8; }
.data td { background: #b8cce4; border-color: #fff; }
.data tr:nth-child(odd) td { background: #dce6f1; }
.data .fields th { height: 22px; }
.fields th:not(:first-child) { padding: 0; background: #4f81bd; border-right: 1px solid #fff; border-bottom: 2px solid #fff; }
.fields .field-h { border-bottom: 1px solid #e8c35a; }
.field { display: flex; align-items: center; height: 20px; padding-right: 1px; font: 700 14px/18px Lato, sans-serif; color: #fff; }
.field span { flex: 1; text-align: center; margin-right: -16px; }
.drop { flex: none; width: 16px; height: 16px; background: linear-gradient(#f4fafd, #c5dfe9); border: 1px solid #9dbfd2; position: relative; }
.drop::before { content: ""; width: 9px; height: 5px; background: #333; clip-path: polygon(0 0, 100% 0, 50% 100%); }
.drop-on::before { display: none; }

/* filter popover */
.filter { position: absolute; left: 629px; top: 293px; width: 292px; background: #363636; color: #fff; font-weight: 500; box-shadow: 0 4px 8px rgba(0, 0, 0, .5); }
.filter-head { position: relative; height: 19px; line-height: 21px; background: #222; text-align: center; font-weight: 400; }
.close { position: absolute; left: 5px; top: 3px; }
.filter-body { padding: 4px 12px 8px; }
.filter h3 { font-weight: 700; }
.sorts { display: flex; justify-content: space-between; padding: 4px 6px 0 11px; }
.sorts button { gap: 5px; font-size: 10px; }
.by-color { display: flex; align-items: center; padding-left: 10px; margin-top: 4px; }
.by-color label { width: 62px; }
.by-sort { margin: 10px 0 14px; }
.pick { position: relative; flex: 1; display: flex; height: 18px; border: 1px solid #777; border-radius: 3px; background: linear-gradient(#5a5a5a, #3c3c3c); font-size: 10px; }
.pick select { appearance: none; flex: 1; padding-left: 3px; }
.pick-off { background: #3b3b3b; border-color: #454545; font-size: 11px; }
.pick-off select { color: #606060; opacity: 1; }
.ticks { display: flex; flex-direction: column; align-items: center; justify-content: center; gap: 3px; width: 14px; }
.ticks i { background: #fff; }
.pick-off .ticks i { background: #666; }
.rule { display: flex; gap: 8px; padding-left: 10px; margin-top: 8px; }
.rule .pick { flex: 0 0 142px; }
.amount { flex: 1; display: flex; align-items: center; height: 18px; background: #868686; outline: 1px solid #555; }
.amount input { flex: 1; width: 0; padding-left: 2px; }
.amount .ticks { align-self: stretch; background: #444; }
.amount-on { position: relative; outline: 2px solid #4a90e2; }
.cursor { position: absolute; left: 41px; top: 3px; width: 1px; height: 13px; background: #000; }
.joins { display: flex; gap: 16px; padding-left: 18px; margin-top: 6px; }
.joins label { display: flex; align-items: center; gap: 4px; height: 15px; }
.joins input { appearance: none; width: 12px; height: 12px; border: 1px solid #888; border-radius: 50%; background: #3a3a3a; }
.joins input:checked { background: radial-gradient(#ccc 0 1px, #3a3a3a 3px); }
.find { display: flex; align-items: center; height: 18px; margin: 8px 0 6px 10px; padding-left: 8px; border-radius: 9px; background: #848484; }
.find input { flex: 1; appearance: none; outline: 0; padding-left: 1px; }
.find input::placeholder { color: #5a5a5a; opacity: 1; }
.values { display: flex; justify-content: space-between; height: 84px; padding: 0 3px 0 25px; }
.value-list label { display: flex; align-items: center; gap: 6px; height: 20px; }
.value-list input { appearance: none; width: 13px; height: 13px; border: 1px solid #6a6a6a; border-radius: 2px; background: linear-gradient(#6a6a6a, #484848); }
.track { width: 14px; background: #222; border-left: 1px solid #777; }
.thumb { width: 10px; height: 18px; margin: 2px 1px; border-radius: 5px; background: linear-gradient(90deg, #777, #444); }
.clear { margin: 13px 3px 0 auto; width: 84px; height: 18px; border: 1px solid #777; border-radius: 9px; background: linear-gradient(#6a6a6a, #474747); }

/* bottom bars */
.bottom { flex: none; display: flex; height: 29px; border-top: 1px solid #888; background: #dcdcdc; font: 11px/14px "Noto Sans", sans-serif; }
.views { display: flex; width: 66px; padding: 4px 4px 0 3px; background: linear-gradient(#eee, #ccc); border-right: 1px solid #999; }
.view { flex: 1; height: 23px; border: 1px solid #888; border-radius: 0 3px 3px 0; background: #f4f4f4; }
.view-on { border-radius: 3px 0 0 3px; background: #48525b; }
.bars { flex: 1; min-width: 0; display: flex; flex-direction: column; }
.sheet-bar { display: flex; height: 16px; background: #96a5b4; }
.steps { width: 66px; height: 14px; padding: 3px 0 0 7px; background: #f4f4f4; }
.sheets { display: flex; padding-left: 13px; height: 15px; }
.sheet-tab { padding: 0 8px; line-height: 13px; background: #dedede; border-right: 1px solid #555; border-bottom: 1px solid #666; border-radius: 0 0 8px 4px; }
.sheet-tab-on { background: #fff; font-weight: 700; padding: 0 6px 0 7px; }
.add { padding: 0 6px; }
.scroll { flex: 0 0 37%; margin-left: auto; background: #fafafa; border-left: 4px solid #d4d8dc; padding: 5px 23px 0 41px; }
.scroll-thumb { height: 8px; border-radius: 4px; background: #bfbfbf; }
.status { flex: 1; display: flex; border-top: 1px solid #888; background: #ececec; line-height: 16px; white-space: nowrap; overflow: hidden; }
.status > span { border-right: 1px solid #888; padding-left: 3px; }
.s-view { width: 94px; }
.status .s-found { width: 377px; padding-left: 7px; }
.s-gap { flex: 1; }
.s-sum { width: 138px; display: flex; justify-content: space-between; padding-right: 5px; }
.caret-big { width: 10px; height: 5px; margin-top: 7px; background: #111; }
.s-box { width: 33px; }
.status .s-rest { width: 93px; border: 0; }
```
